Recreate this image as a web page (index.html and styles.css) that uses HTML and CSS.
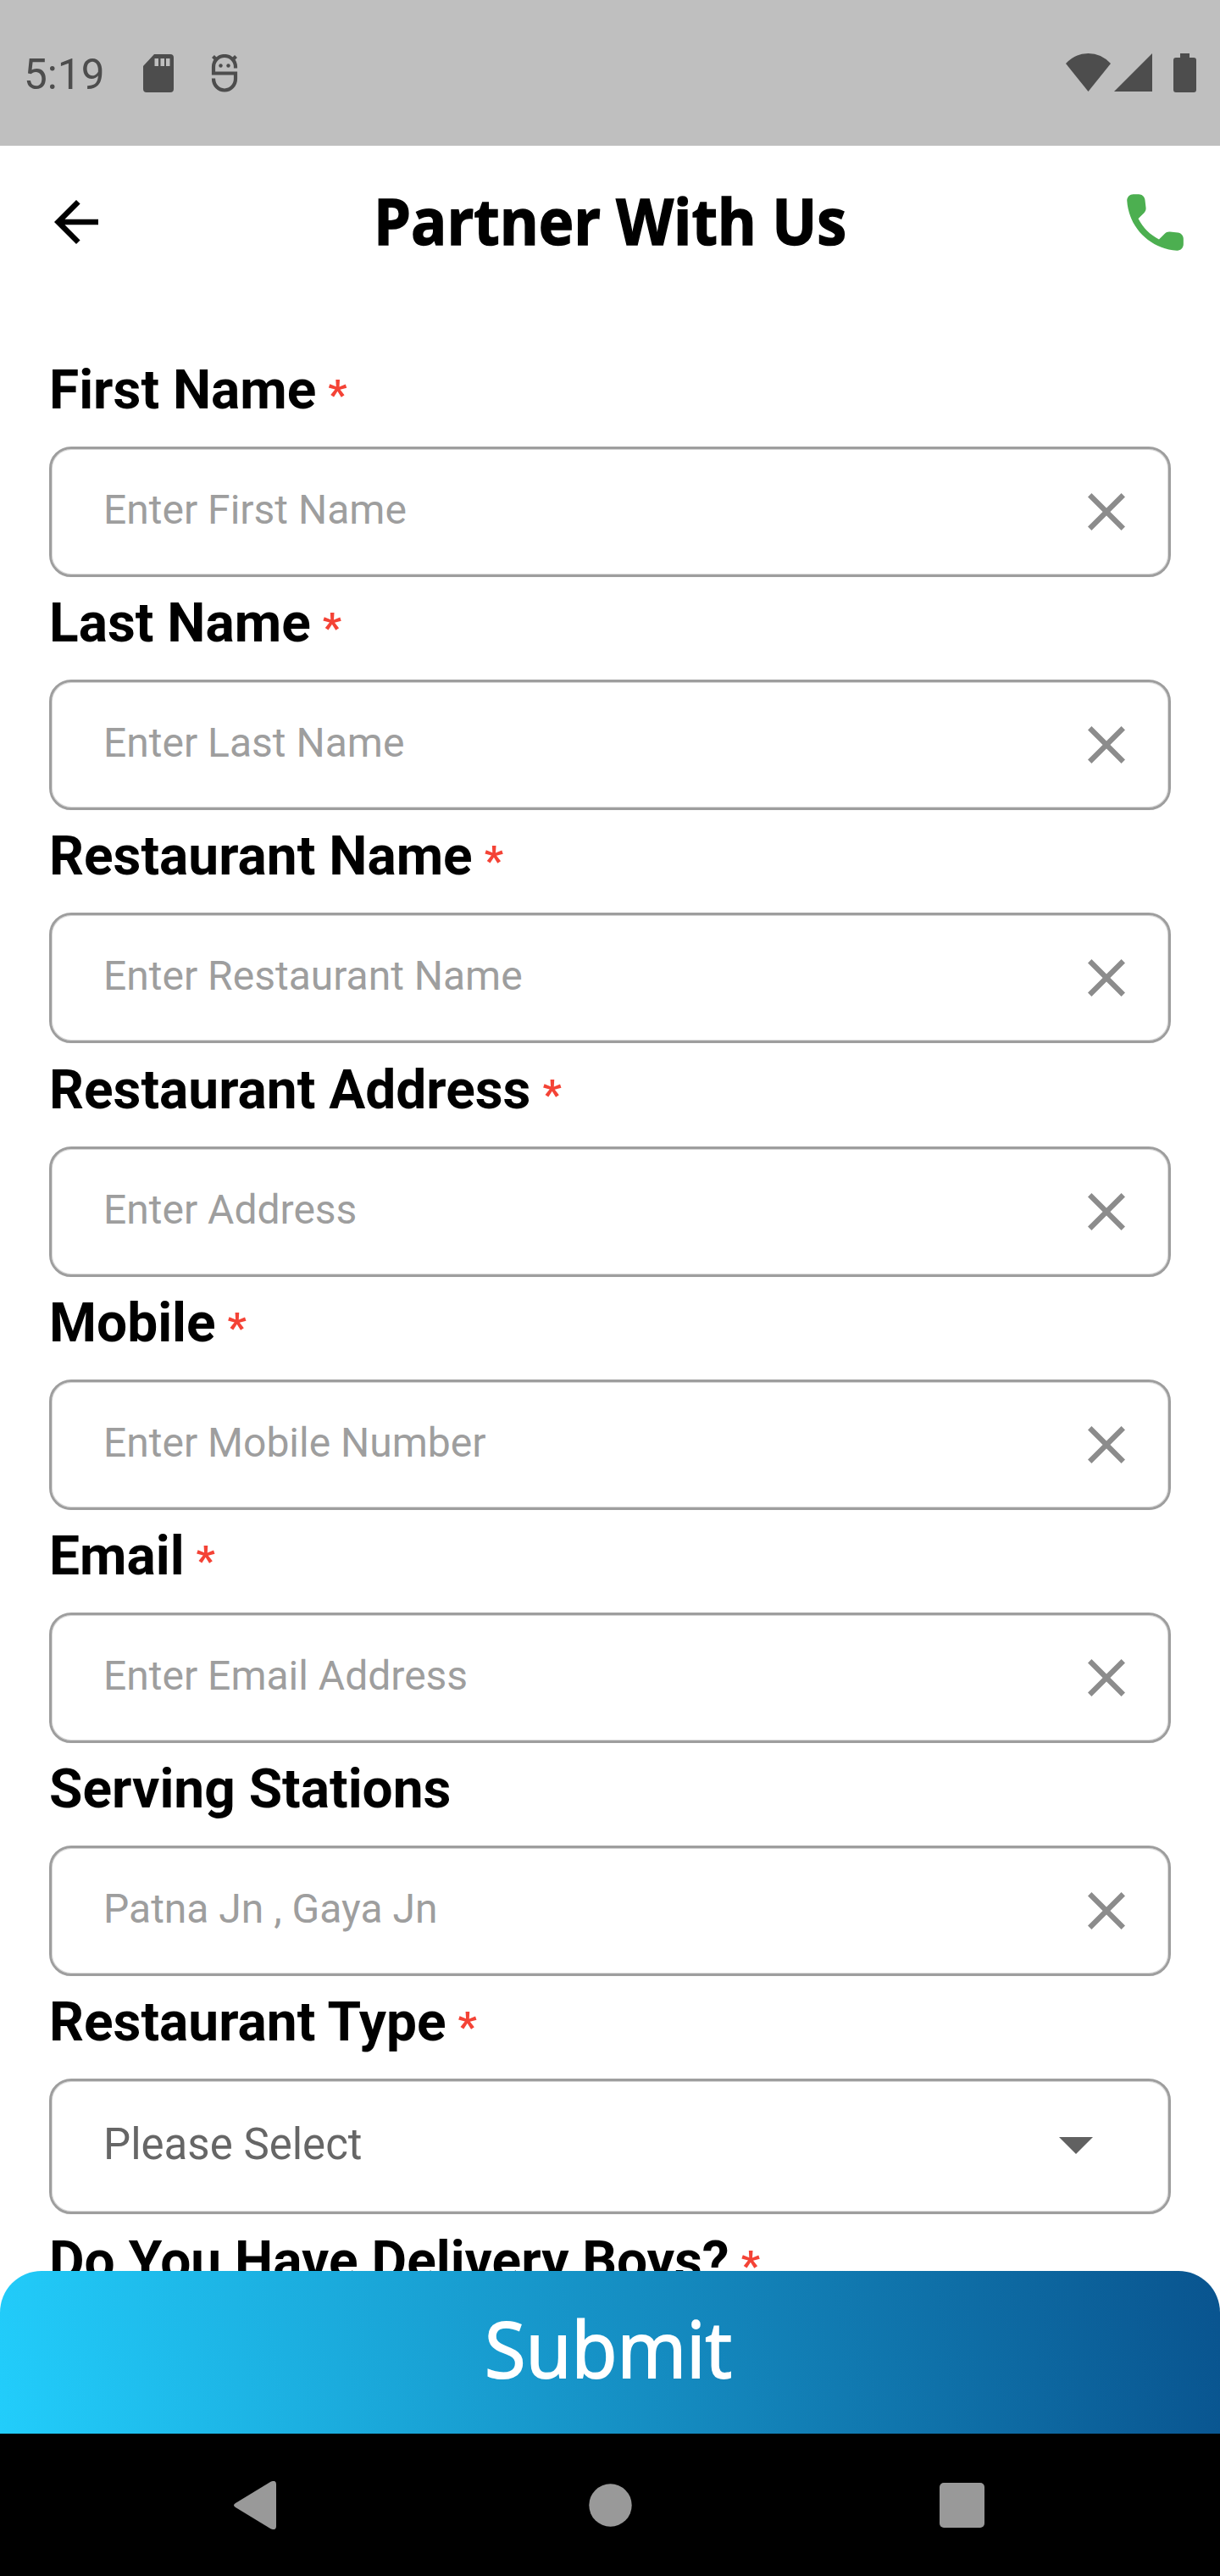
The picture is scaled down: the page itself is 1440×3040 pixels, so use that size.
FILE: index.html
```html
<!DOCTYPE html>
<html lang="en">
<head>
<meta charset="utf-8">
<title>Partner With Us</title>
<link rel="stylesheet" href="styles.css">
</head>
<body>
<div class="screen">
  <div class="status-bar">
    <span class="clock">5:19</span>
    <svg class="sd" width="36" height="45" viewBox="0 0 36 45"><path fill="#4d4d4d" fill-rule="evenodd" d="M13 0H32Q36 0 36 4V41Q36 45 32 45H4Q0 45 0 41V14ZM13.500 5V14H18V5ZM20.500 5V14H25V5ZM27 5V14H31.500V5Z"/></svg>
    <svg class="debug" width="32" height="45" viewBox="0 0 32 45"><g fill="none" stroke="#4d4d4d" stroke-width="4.200"><path d="M29 16.500V15A13 13 0 0 0 3 15V22.500H29V29A13 13.500 0 0 1 3 29V28.500"/><path d="M2.500 2.500L7 7M29.500 2.500L25 7"/></g><circle cx="11.500" cy="13.500" r="2.200" fill="#4d4d4d"/><circle cx="20.500" cy="13.500" r="2.200" fill="#4d4d4d"/></svg>
    <span class="spacer"></span>
    <svg class="wifi" width="53" height="45" viewBox="0 0 53 45"><path fill="#4d4d4d" d="M0 12Q11 0 26.500 0T53 12L26.500 45Z"/></svg>
    <svg class="signal" width="45" height="45" viewBox="0 0 45 45"><path fill="#4d4d4d" d="M0 45L45 0V45Z"/></svg>
    <svg class="battery" width="27" height="46" viewBox="0 0 27 46"><path fill="#4d4d4d" d="M8 0H19V5H24Q27 5 27 8V43Q27 46 24 46H3Q0 46 0 43V8Q0 5 3 5H8Z"/></svg>
  </div>

  <header class="app-bar">
    <svg class="back" width="52" height="52" viewBox="4 4 16 16"><path d="M20 11H7.830l5.590-5.590L12 4l-8 8 8 8 1.410-1.410L7.830 13H20v-2z"/></svg>
    <svg class="title" role="heading" aria-level="1" width="560" height="110" viewBox="0 0 560 110"><text x="-2" y="82" textLength="558" lengthAdjust="spacingAndGlyphs">Partner With Us</text></svg>
    <svg class="call" width="89" height="89" viewBox="0 0 24 24"><path fill="#4caf50" d="M19.230 15.260l-2.540-.29c-.61-.07-1.210.14-1.640.57l-1.840 1.840c-2.830-1.440-5.150-3.750-6.590-6.590l1.850-1.850c.43-.43.64-1.030.57-1.640l-.29-2.520c-.12-1.010-.97-1.770-1.990-1.770H5.030c-1.130 0-2.070.94-2 2.070.53 8.540 7.360 15.360 15.890 15.890 1.130.07 2.070-.87 2.070-2v-1.730c.01-1.010-.75-1.860-1.760-1.980z"/></svg>
  </header>

  <main class="form">
    <div class="field"><div class="label">First Name<span class="req">*</span></div><div class="box"><span>Enter First Name</span><svg class="clear" viewBox="5 5 14 14"><path d="M19 6.410L17.590 5 12 10.590 6.410 5 5 6.410 10.590 12 5 17.590 6.410 19 12 13.410 17.590 19 19 17.590 13.410 12z"/></svg></div></div>
    <div class="field"><div class="label">Last Name<span class="req">*</span></div><div class="box"><span>Enter Last Name</span><svg class="clear" viewBox="5 5 14 14"><path d="M19 6.410L17.590 5 12 10.590 6.410 5 5 6.410 10.590 12 5 17.590 6.410 19 12 13.410 17.590 19 19 17.590 13.410 12z"/></svg></div></div>
    <div class="field"><div class="label">Restaurant Name<span class="req">*</span></div><div class="box"><span>Enter Restaurant Name</span><svg class="clear" viewBox="5 5 14 14"><path d="M19 6.410L17.590 5 12 10.590 6.410 5 5 6.410 10.590 12 5 17.590 6.410 19 12 13.410 17.590 19 19 17.590 13.410 12z"/></svg></div></div>
    <div class="field"><div class="label">Restaurant Address<span class="req">*</span></div><div class="box"><span>Enter Address</span><svg class="clear" viewBox="5 5 14 14"><path d="M19 6.410L17.590 5 12 10.590 6.410 5 5 6.410 10.590 12 5 17.590 6.410 19 12 13.410 17.590 19 19 17.590 13.410 12z"/></svg></div></div>
    <div class="field"><div class="label">Mobile<span class="req">*</span></div><div class="box"><span>Enter Mobile Number</span><svg class="clear" viewBox="5 5 14 14"><path d="M19 6.410L17.590 5 12 10.590 6.410 5 5 6.410 10.590 12 5 17.590 6.410 19 12 13.410 17.590 19 19 17.590 13.410 12z"/></svg></div></div>
    <div class="field"><div class="label">Email<span class="req">*</span></div><div class="box"><span>Enter Email Address</span><svg class="clear" viewBox="5 5 14 14"><path d="M19 6.410L17.590 5 12 10.590 6.410 5 5 6.410 10.590 12 5 17.590 6.410 19 12 13.410 17.590 19 19 17.590 13.410 12z"/></svg></div></div>
    <div class="field"><div class="label">Serving Stations</div><div class="box"><span>Patna Jn , Gaya Jn</span><svg class="clear" viewBox="5 5 14 14"><path d="M19 6.410L17.590 5 12 10.590 6.410 5 5 6.410 10.590 12 5 17.590 6.410 19 12 13.410 17.590 19 19 17.590 13.410 12z"/></svg></div></div>
    <div class="field field-select"><div class="label">Restaurant Type<span class="req">*</span></div><div class="box select"><span>Please Select</span><svg class="caret" width="40" height="20" viewBox="0 0 40 20"><path fill="#616161" d="M0 0H40L20 20Z"/></svg></div></div>
    <div class="field"><div class="label">Do You Have Delivery Boys?<span class="req">*</span></div></div>
  </main>

  <div class="submit"><svg role="button" width="300" height="120" viewBox="0 0 300 120"><text x="2" y="90" textLength="292" lengthAdjust="spacingAndGlyphs">Submit</text></svg></div>

  <nav class="nav-bar">
    <svg width="50" height="57" viewBox="0 0 50 57"><path fill="#999" d="M43.500 .8Q50-2 50 4V53Q50 59 43.500 56.200L2 31Q-2 28.500 2 26Z"/></svg>
    <svg class="home" width="51" height="51" viewBox="0 0 51 51"><circle cx="25.500" cy="25.500" r="25.200" fill="#999"/></svg>
    <svg width="53" height="53" viewBox="0 0 53 53"><rect width="53" height="53" rx="5" fill="#999"/></svg>
  </nav>
</div>
</body>
</html>
```
FILE: styles.css
```css
* { box-sizing: border-box; }
body { margin: 0; background: #fff; font-family: Roboto, sans-serif; }
svg { display: block; flex: none; }

.screen { width: 1440px; height: 3040px; display: flex; flex-direction: column; overflow: hidden; }

.status-bar { flex: none; height: 172px; background: #bfbfbf; display: flex; align-items: flex-start; padding: 63px 28px 0 28px; }
.clock { font-size: 49.500px; line-height: 50px; color: #4d4d4d; width: 141px; }
.sd { margin-top: 1px; }
.debug { margin: 1px 0 0 44px; }
.spacer { flex: 1; }
.wifi { margin-right: 4px; }
.signal { margin-right: 25px; }

.app-bar { flex: none; height: 180px; display: flex; justify-content: space-between; align-items: center; padding: 0 32px 0 64px; }
.title { margin-left: 10px; overflow: visible; }
.title text { font: 700 76px "Open Sans", sans-serif; stroke: #000; stroke-width: 1.500px; }

.form { flex: none; height: 2328px; padding: 75px 58px 0; overflow: hidden; }
.field { height: 275.200px; }
.field-select { height: 281.500px; }
.label { height: 100px; padding-top: 2px; font-size: 64px; font-weight: 700; line-height: 64px; white-space: nowrap; }
.req { margin-left: 14px; font-size: 49px; font-weight: 700; line-height: 1px; color: #f44336; }
.box { height: 154px; border: 3px solid #9e9e9e; border-radius: 26px; box-shadow: inset 0 0 0 1px #d8d8d8; display: flex; align-items: center; justify-content: space-between; padding: 0 51px 0 61px; font-size: 48px; color: #9e9e9e; }
.box span { margin-bottom: 5px; }
.clear { width: 44px; height: 44px; fill: #8c8c8c; }
.select { height: 160px; padding-right: 89px; font-size: 51px; color: #666; }
.caret { margin-bottom: 3px; }

.submit { flex: none; height: 192px; border-radius: 49px 49px 0 0; background: linear-gradient(82.400deg, #22cdfb, #09548f); display: flex; justify-content: center; padding-top: 36px; }
.submit svg { overflow: visible; }
.submit text { font: 500 92px "Open Sans", sans-serif; fill: #fff; stroke: #fff; stroke-width: 2px; }

.nav-bar { flex: none; height: 168px; background: #000; display: flex; align-items: center; justify-content: space-between; padding: 0 278px 0 276px; }
.home { margin-left: 6px; }
```
